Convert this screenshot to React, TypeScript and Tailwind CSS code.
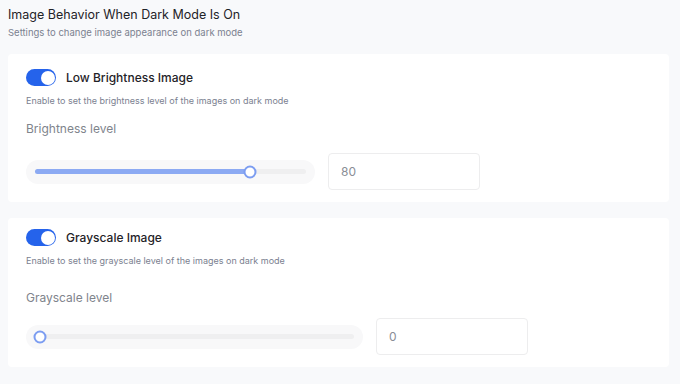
import React from "react";

function Toggle() {
  return (
    <div className="w-[30px] h-[17px] rounded-full bg-[#2563eb] flex items-center justify-end px-[1.5px] shrink-0">
      <div className="w-[14px] h-[14px] rounded-full bg-white" />
    </div>
  );
}

function Slider({ width, pct }: { width: number; pct: number }) {
  return (
    <div
      className="h-[24px] rounded-full bg-[#f8f8f9] flex items-center px-[9px] shrink-0"
      style={{ width }}
    >
      <div className="relative h-[5px] w-full rounded-full bg-[#efeff0]">
        <div
          className="absolute left-0 top-0 h-full rounded-full bg-[#8caaf3]"
          style={{ width: `${pct}%` }}
        />
        <div
          className="absolute top-1/2 w-[13px] h-[13px] -translate-x-1/2 -translate-y-1/2 rounded-full bg-white border-2 border-[#7c9df1]"
          style={{ left: `${pct === 0 ? 1.6 : pct}%` }}
        />
      </div>
    </div>
  );
}

function Card({
  title,
  desc,
  label,
  value,
  sliderWidth,
  pct,
  pt,
  descGap,
  labelGap,
  inputGap,
}: {
  title: string;
  desc: string;
  label: string;
  value: string;
  sliderWidth: number;
  pct: number;
  pt: string;
  descGap: string;
  labelGap: string;
  inputGap: string;
}) {
  return (
    <div className={`bg-white rounded-[4px] pl-[18px] pb-[12px] ${pt}`}>
      <div className="flex items-center gap-[10px]">
        <Toggle />
        <span className="text-[12px] leading-[17px] font-medium text-[#1f2328]">{title}</span>
      </div>
      <div className={`text-[9px] leading-[14px] text-[#7b8190] ${descGap}`}>{desc}</div>
      <div className={`text-[12px] leading-[18px] text-[#80848c] ${labelGap}`}>{label}</div>
      <div className={`flex items-center gap-[13px] ${inputGap}`}>
        <Slider width={sliderWidth} pct={pct} />
        <div className="w-[152px] h-[37px] rounded-[4px] border border-[#ededee] bg-white flex items-center pl-[12px] text-[12px] text-[#8a8e96]">
          {value}
        </div>
      </div>
    </div>
  );
}

export default function App() {
  return (
    <div
      className="w-[680px] h-[384px] overflow-hidden bg-[#f8f9fb] pl-[8px] pr-[11px]"
      style={{ fontFamily: "Inter, 'Noto Sans', sans-serif" }}
    >
      <div className="pt-[5px] text-[12.5px] leading-[20px] font-normal text-[#1f2328]">
        Image Behavior When Dark Mode Is On
      </div>
      <div className="text-[9.5px] leading-[16px] text-[#7b8190]">
        Settings to change image appearance on dark mode
      </div>
      <div className="mt-[13px] flex flex-col gap-[16px]">
        <Card
          title="Low Brightness Image"
          desc="Enable to set the brightness level of the images on dark mode"
          label="Brightness level"
          value="80"
          sliderWidth={289}
          pct={79.5}
          pt="pt-[15px]"
          descGap="mt-[8px]"
          labelGap="mt-[12px]"
          inputGap="mt-[15px]"
        />
        <Card
          title="Grayscale Image"
          desc="Enable to set the grayscale level of the images on dark mode"
          label="Grayscale level"
          value="0"
          sliderWidth={337}
          pct={0}
          pt="pt-[11px]"
          descGap="mt-[8px]"
          labelGap="mt-[21px]"
          inputGap="mt-[11px]"
        />
      </div>
    </div>
  );
}
